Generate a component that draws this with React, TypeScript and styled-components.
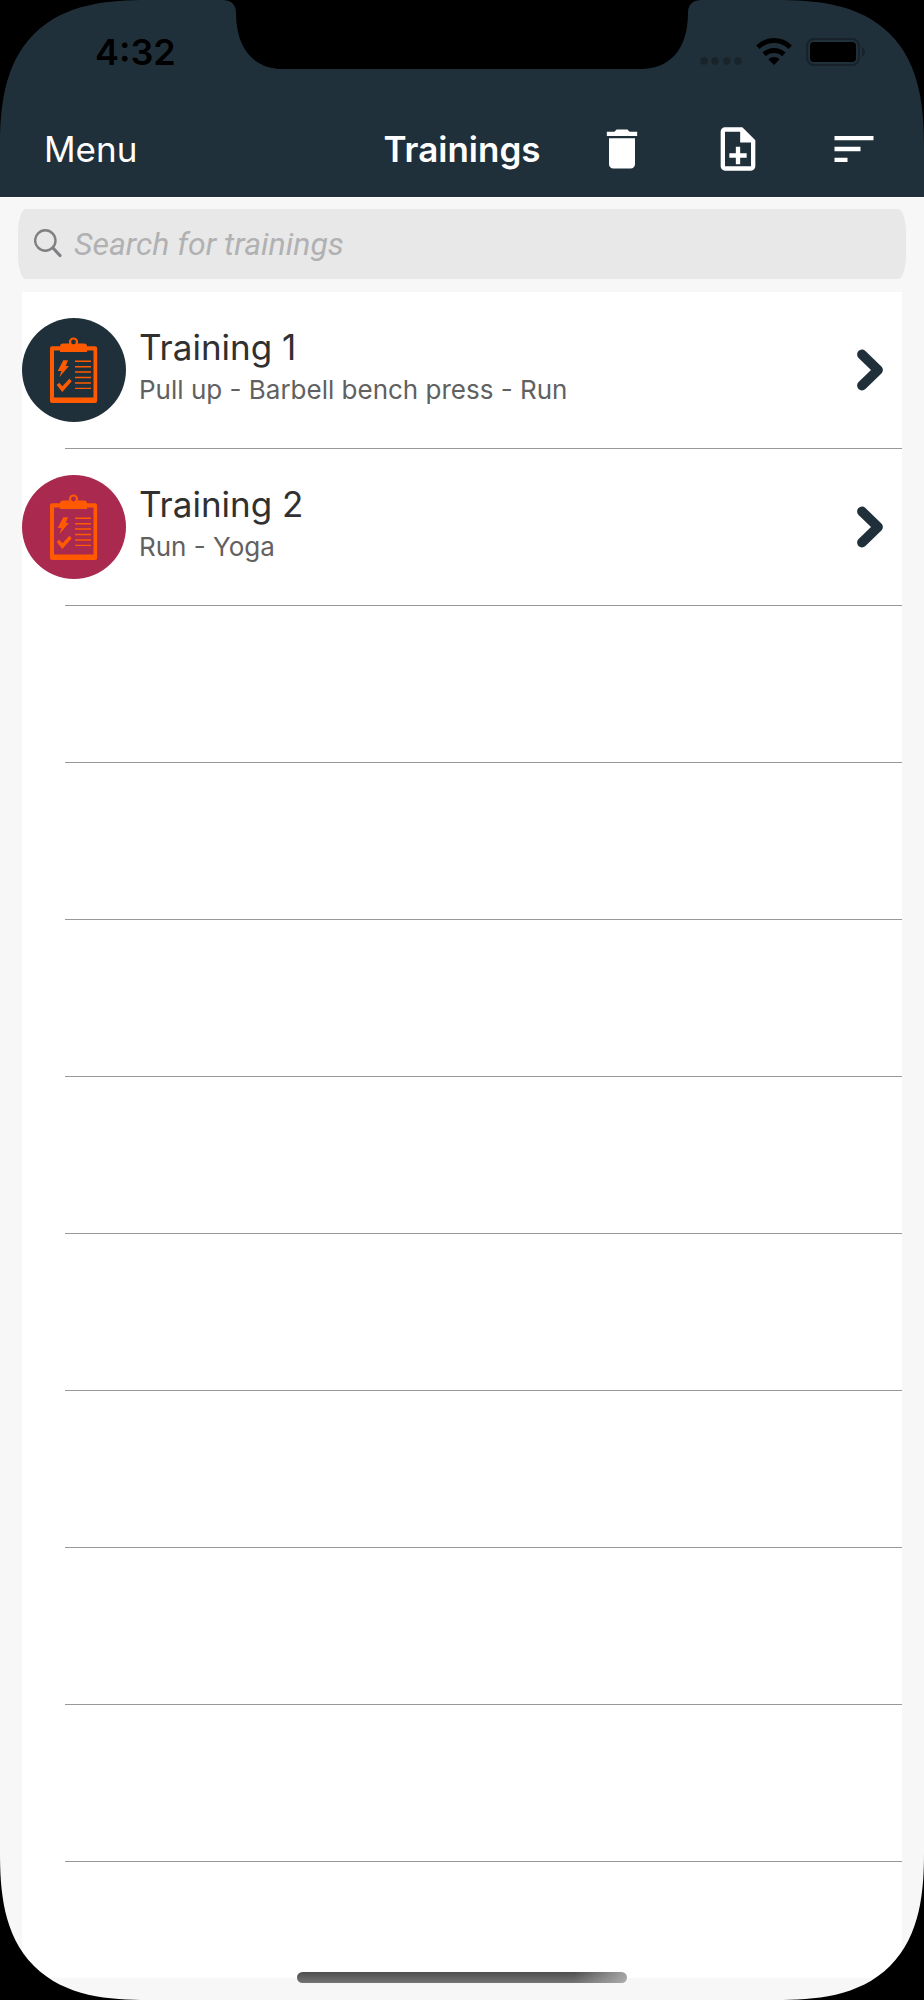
import React from "react";
import styled, { createGlobalStyle } from "styled-components";

const NAVY = "#20303a";
const ORANGE = "#ff5a00";

const GlobalStyle = createGlobalStyle`
  *, *::before, *::after { box-sizing: border-box; }
  body {
    margin: 0;
    background: #000;
    font-family: Inter, "Liberation Sans", sans-serif;
  }
`;

const Screen = styled.div`
  position: relative;
  display: flex;
  flex-direction: column;
  min-height: 100vh;
  background: #f7f7f7;
  overflow: hidden;
`;

const Header = styled.header`
  background: ${NAVY};
  border-bottom: 1px solid #fff;
`;

const StatusBar = styled.div`
  display: flex;
  align-items: center;
  justify-content: space-between;
  height: 104px;
  padding: 0 59px 0 95px;
`;

const Clock = styled.time`
  font-size: 36px;
  font-weight: 600;
  line-height: 44px;
  color: #000;
`;

const StatusIcons = styled.div`
  display: flex;
  align-items: center;
  gap: 14px;
`;

const NavBar = styled.nav`
  display: grid;
  grid-template-columns: 1fr auto 1fr;
  align-items: center;
  height: 93px;
  padding: 0 44px 4px;
  color: #fff;
`;

const PlainButton = styled.button`
  display: block;
  padding: 0;
  border: 0;
  background: none;
  color: inherit;
  font: inherit;
  cursor: pointer;
`;

const MenuButton = styled(PlainButton)`
  justify-self: start;
  font-size: 35px;
  line-height: 44px;
`;

const Title = styled.h1`
  margin: 0;
  font-size: 35px;
  font-weight: 600;
  line-height: 44px;
`;

const Actions = styled.div`
  display: flex;
  justify-content: flex-end;
  gap: 64px;
`;

const ActionIcon = styled.svg`
  display: block;
  width: 52px;
  height: 52px;
  fill: currentColor;
`;

const SearchArea = styled.form`
  padding: 11px 18px 13px;
`;

const SearchField = styled.label`
  display: flex;
  align-items: center;
  gap: 12px;
  height: 70px;
  padding: 0 16px;
  border-radius: 8px / 24px;
  background: #e8e8e8;
`;

const SearchInput = styled.input`
  flex: 1;
  min-width: 0;
  padding: 0;
  border: 0;
  outline: 0;
  background: transparent;
  font: 32px / 36px Roboto, "Liberation Sans", sans-serif;
  color: #333;

  &::placeholder {
    color: #b1b1b3;
    font-style: italic;
    opacity: 1;
  }
`;

const List = styled.ul`
  flex: 1;
  margin: 0 22px 22px;
  padding: 0;
  list-style: none;
  background: #fff;
`;

const Item = styled.li`
  display: flex;
  flex-direction: column;
  height: 157px;

  &::after {
    content: "";
    height: 1px;
    margin-left: 43px;
    background: #999;
  }
`;

const RowLink = styled.a`
  display: flex;
  align-items: center;
  gap: 13px;
  height: 156px;
  padding-right: 19px;
  color: #303030;
  text-decoration: none;
`;

const EmptyRow = styled.div`
  height: 156px;
`;

const Avatar = styled.svg<{ $color: string }>`
  flex: none;
  width: 104px;
  height: 104px;
  border-radius: 50%;
  background: ${(p) => p.$color};
`;

const RowText = styled.div`
  flex: 1;
  min-width: 0;
  padding-bottom: 6px;
`;

const RowTitle = styled.div`
  font-size: 35px;
  line-height: 46px;
`;

const RowDetail = styled.div`
  font-size: 26px;
  line-height: 40px;
  color: #616161;
`;

const Corner = styled.svg<{ $side: "left" | "right"; $edge: "top" | "bottom" }>`
  position: absolute;
  ${(p) => p.$edge}: 0;
  ${(p) => p.$side}: 0;
  width: 148px;
  height: 148px;
  transform: scale(
    ${(p) => (p.$side === "left" ? 1 : -1)},
    ${(p) => (p.$edge === "top" ? 1 : -1)}
  );
  pointer-events: none;
`;

const Notch = styled.svg`
  position: absolute;
  top: 0;
  left: 50%;
  width: 480px;
  height: 69px;
  transform: translateX(-50%);
  pointer-events: none;
`;

const HomeIndicator = styled.div`
  position: absolute;
  bottom: 17px;
  left: 50%;
  width: 330px;
  height: 11px;
  border-radius: 6px;
  background:
    linear-gradient(to right, transparent 84%, rgba(190, 190, 190, 0.75)),
    linear-gradient(#4d4d4d, #747474);
  transform: translateX(-50%);
`;

const corners = [
  ["left", "top"],
  ["right", "top"],
  ["left", "bottom"],
  ["right", "bottom"],
] as const;

const trainings = [
  { name: "Training 1", detail: "Pull up - Barbell bench press - Run", color: NAVY },
  { name: "Training 2", detail: "Run - Yoga", color: "#a9294f" },
];

const EMPTY_ROWS = 8;

function SignalDots() {
  return (
    <svg width="42" height="28" fill="#18232a" aria-hidden="true">
      {[4, 15, 27, 38].map((x) => (
        <circle key={x} cx={x} cy="23" r="3.7" />
      ))}
    </svg>
  );
}

function Wifi() {
  return (
    <svg width="36" height="28" viewBox="0 0 36 28" aria-hidden="true">
      <path d="M18 27 L12.3 21.2 A8.2 8.2 0 0 1 23.7 21.2 Z" />
      <path d="M8.2 16.4 A14.2 14.2 0 0 1 27.8 16.4" fill="none" stroke="#000" strokeWidth="5" />
      <path d="M1.8 9.2 A23 23 0 0 1 34.2 9.2" fill="none" stroke="#000" strokeWidth="5" />
    </svg>
  );
}

function Battery() {
  return (
    <svg width="59" height="28" viewBox="0 0 59 28" aria-hidden="true">
      <rect x="1" y="1" width="52" height="26" rx="7" fill="none" stroke="#17222a" strokeWidth="2" />
      <rect x="4" y="4" width="46" height="20" rx="4" />
      <path d="M56 9.5 Q59 11 59 14 T56 18.5Z" fill="#17222a" />
    </svg>
  );
}

function ClipboardAvatar({ color }: { color: string }) {
  return (
    <Avatar $color={color} viewBox="0 0 104 104" fill={ORANGE} aria-hidden="true">
      <path
        fillRule="evenodd"
        d="M30 28.3H73Q75.2 28.3 75.2 30.5V83Q75.2 85 73 85H30Q28 85 28 83V30.5Q28 28.3 30 28.3ZM32 32.4V79.5H71.5V32.4Z"
      />
      <path d="M38 34V28.5Q38 25.6 41 25.6H47L48 24H55L56 25.6H62Q65 25.6 65 28.5V34Z" />
      <circle cx="51.5" cy="24" r="3.5" fill={color} stroke={ORANGE} strokeWidth="2.2" />
      <path d="M41.3 42.3H46L43.7 48H46.9L37.3 59.3L39.5 53H35.7Z" />
      <path d="M34.7 67L37.2 64.8L40.4 68.2L47.4 60.7L49.7 63.2L40.3 74Z" />
      <path
        d="M53 43.3H69M53 48.7H69M53 54H69M53 59.5H69M53 65H69M53 70.4H69"
        stroke={ORANGE}
        strokeWidth="1.4"
      />
    </Avatar>
  );
}

function Chevron() {
  return (
    <svg width="26" height="42" viewBox="0 0 26 42" aria-hidden="true">
      <path
        d="M5 5.5L21 21L5 36.5"
        fill="none"
        stroke={NAVY}
        strokeWidth="9.8"
        strokeLinecap="round"
        strokeLinejoin="round"
      />
    </svg>
  );
}

export default function App() {
  return (
    <>
      <GlobalStyle />
      <Screen>
        <Header>
          <StatusBar>
            <Clock>4:32</Clock>
            <StatusIcons>
              <SignalDots />
              <Wifi />
              <Battery />
            </StatusIcons>
          </StatusBar>
          <NavBar>
            <MenuButton type="button">Menu</MenuButton>
            <Title>Trainings</Title>
            <Actions>
              <PlainButton type="button" aria-label="Delete">
                <ActionIcon viewBox="0 0 24 24">
                  <path d="M6 19c0 1.1.9 2 2 2h8c1.1 0 2-.9 2-2V7H6v12zM19 4h-3.5l-1-1h-5l-1 1H5v2h14V4z" />
                </ActionIcon>
              </PlainButton>
              <PlainButton type="button" aria-label="Add training">
                <ActionIcon viewBox="0 0 24 24">
                  <path d="M13 11h-2v3H8v2h3v3h2v-3h3v-2h-3zm1-9H6c-1.1 0-2 .9-2 2v16c0 1.1.89 2 1.99 2H18c1.1 0 2-.9 2-2V8l-6-6zm4 18H6V4h7v5h5v11z" />
                </ActionIcon>
              </PlainButton>
              <PlainButton type="button" aria-label="Sort">
                <ActionIcon viewBox="0 0 24 24">
                  <path d="M3 18h6v-2H3v2zM3 6v2h18V6H3zm0 7h12v-2H3v2z" />
                </ActionIcon>
              </PlainButton>
            </Actions>
          </NavBar>
        </Header>

        <SearchArea role="search">
          <SearchField>
            <svg width="28" height="30" viewBox="0 0 28 30" fill="none" stroke="#808084" aria-hidden="true">
              <circle cx="11.3" cy="11.5" r="10.2" strokeWidth="2.4" />
              <path d="M19 19L26 26.5" strokeWidth="3.2" strokeLinecap="round" />
            </svg>
            <SearchInput type="text" placeholder="Search for trainings" aria-label="Search for trainings" />
          </SearchField>
        </SearchArea>

        <List>
          {trainings.map((t) => (
            <Item key={t.name}>
              <RowLink href="#">
                <ClipboardAvatar color={t.color} />
                <RowText>
                  <RowTitle>{t.name}</RowTitle>
                  <RowDetail>{t.detail}</RowDetail>
                </RowText>
                <Chevron />
              </RowLink>
            </Item>
          ))}
          {Array.from({ length: EMPTY_ROWS }, (_, i) => (
            <Item key={i} aria-hidden="true">
              <EmptyRow />
            </Item>
          ))}
        </List>

        <HomeIndicator />
        <Notch viewBox="0 0 480 69" aria-hidden="true">
          <path d="M0 0C9 0 14 4 14 13C14 50 33 69 61 69H419C447 69 466 50 466 13C466 4 471 0 480 0Z" />
        </Notch>
        {corners.map(([side, edge]) => (
          <Corner key={side + edge} $side={side} $edge={edge} viewBox="0 0 148 148" aria-hidden="true">
            <path d="M0 0H148C110 0 65 3 34 34C3 65 0 110 0 148Z" />
          </Corner>
        ))}
      </Screen>
    </>
  );
}
